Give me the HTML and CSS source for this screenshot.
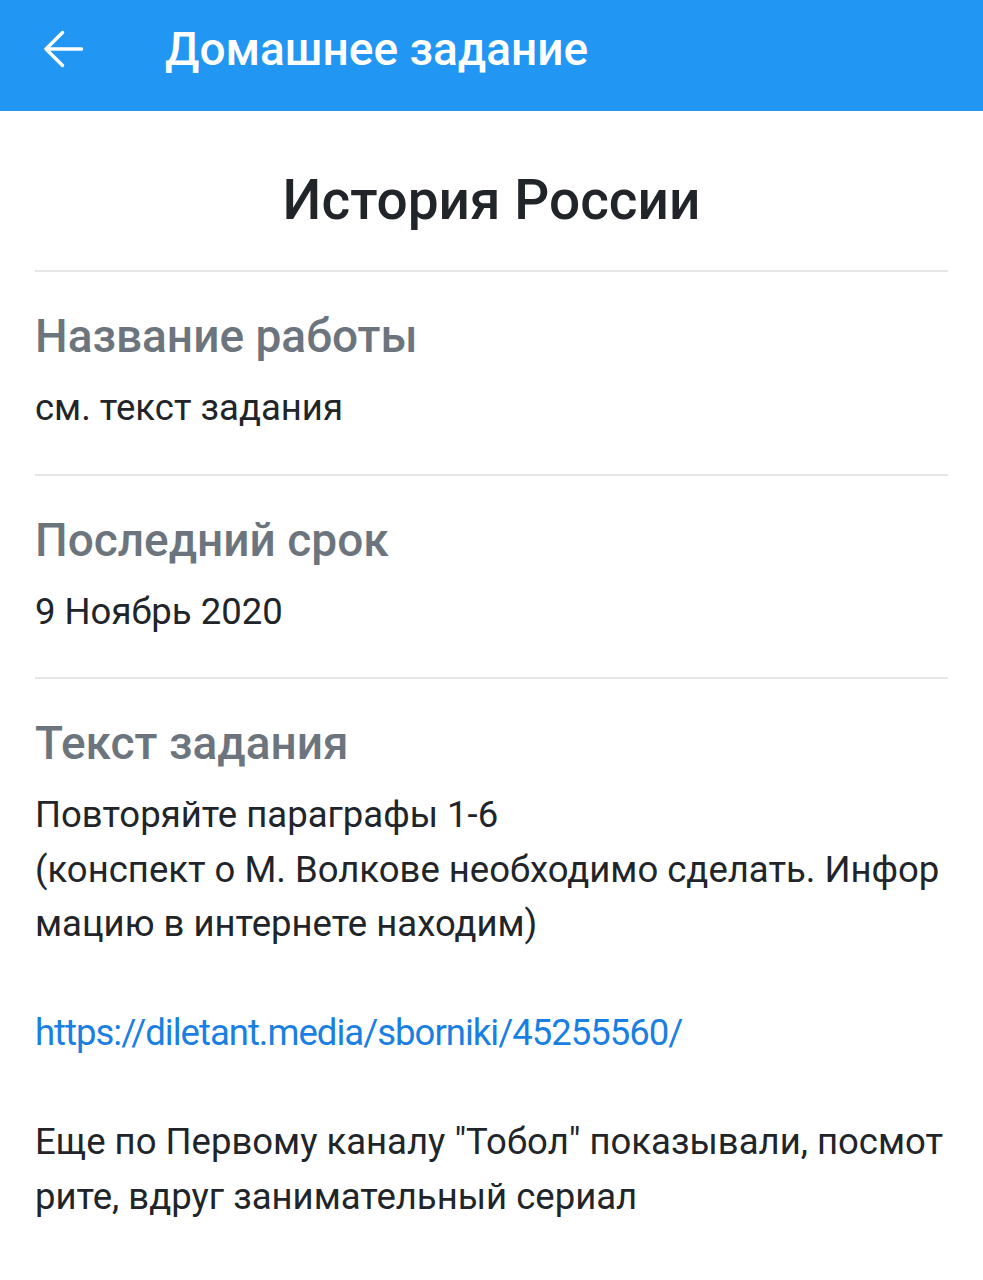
FILE: index.html
```html
<!DOCTYPE html>
<html lang="ru">
<head>
  <meta charset="UTF-8" />
  <title>Домашнее задание</title>
  <link rel="stylesheet" href="styles.css">
</head>
<body>

  <!-- шапка -->
  <header class="app-bar">
    <button class="back-btn" type="button" aria-label="Назад">
      <svg viewBox="0 0 40 40" width="40" height="40">
        <path d="M3 20H38.5M3 20L19.5 3.5M3 20L19.5 36.5" fill="none" stroke="#fff" stroke-width="3.4" stroke-linecap="round" stroke-linejoin="round" />
      </svg>
    </button>
    <div class="app-title">Домашнее задание</div>
  </header>

  <main class="content">
    <h1 class="subject">История России</h1>

    <section class="field">
      <div class="field-title">Название работы</div>
      <div class="field-value">см. текст задания</div>
    </section>

    <section class="field">
      <div class="field-title">Последний срок</div>
      <div class="field-value">9 Ноябрь 2020</div>
    </section>

    <section class="field last">
      <div class="field-title">Текст задания</div>
      <div class="field-value">
        Повторяйте параграфы 1-6<br>
        (конспект о М. Волкове необходимо сделать. Инфор мацию в интернете находим)<br>
        <br>
        <a href="#">https://diletant.media/sborniki/45255560/</a><br>
        <br>
        Еще по Первому каналу "Тобол" показывали, посмот рите, вдруг занимательный сериал
      </div>
    </section>
  </main>

</body>
</html>
```

FILE: styles.css
```css
* {
  margin: 0;
  padding: 0;
  box-sizing: border-box;
}

body {
  font-family: Roboto, "Noto Sans", sans-serif;
  background-color: #fff;
  color: #212529;
}

/* шапка */
.app-bar {
  display: flex;
  align-items: center;
  height: 111px;
  padding: 0 0 14px 43px;
  background-color: #2196f3;
}

.back-btn {
  display: flex;
  border: none;
  background: none;
  cursor: pointer;
}

.app-title {
  margin-left: 82px;
  font-size: 46px;
  font-weight: 500;
  color: #fff;
}

/* содержимое */
.content {
  padding: 0 35px;
}

.subject {
  margin: 54px 0 35px;
  line-height: 70px;
  font-size: 55px;
  font-weight: 500;
  text-align: center;
}

.field {
  padding: 34px 0 38px;
  border-top: 2px solid #e6e6e6;
}

.field-title {
  line-height: 60px;
  font-size: 46px;
  font-weight: 500;
  color: #6c757d;
}

.field-value {
  margin-top: 15px;
  line-height: 54.5px;
  font-size: 36.5px;
}

.field-value a {
  color: #1a7fe3;
  letter-spacing: -1px;
  text-decoration: none;
}
```
